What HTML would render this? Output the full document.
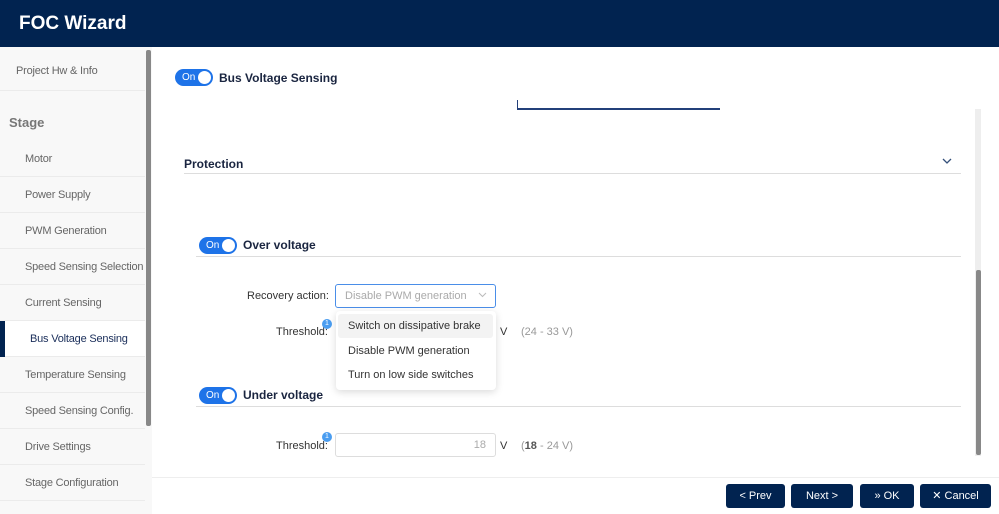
<!DOCTYPE html>
<html><head><style>
*{box-sizing:border-box;margin:0;padding:0}
body{width:999px;height:514px;overflow:hidden;font-family:"Liberation Sans",sans-serif;background:#fff;position:relative}
.hdr{position:absolute;left:0;top:0;width:999px;height:47px;background:#012350;color:#fff;font-size:19px;font-weight:bold;padding:13px 0 0 19px}
.side{position:absolute;left:0;top:47px;width:152px;height:467px;background:#f8f8f8}
.si{position:absolute;left:0;width:145px;height:36px;font-size:11px;color:#666;padding-left:25px;line-height:36px;border-bottom:1px solid #ebebeb;white-space:nowrap;letter-spacing:-0.2px}
.sb{position:absolute;left:146px;top:50px;width:5px;height:376px;background:#888;border-radius:2px}
.sel{background:#fff;color:#1a2e5a}
.sel:before{content:"";position:absolute;left:0;top:0;width:5px;height:36px;background:#012350}
.tog{position:absolute;width:38px;height:17px;border-radius:9px;background:#1e73e8;color:#fff;font-size:10px;line-height:17px;padding-left:7px}
.tog:after{content:"";position:absolute;right:2px;top:2px;width:13px;height:13px;border-radius:50%;background:#fff}
.t{position:absolute;font-weight:bold;color:#1a2540;font-size:12px}
.hr{position:absolute;height:1px;background:#ddd}
.lbl{position:absolute;font-size:11px;color:#333;white-space:nowrap}
.badge{position:absolute;width:10px;height:10px;border-radius:50%;background:#4a9df0;color:#fff;font-size:7px;text-align:center;line-height:10px}
.btn{position:absolute;top:484px;height:24px;background:#012350;color:#fff;font-size:11px;border-radius:3px;text-align:center;line-height:24px}
</style></head><body>
<div class="hdr">FOC Wizard</div>
<div class="side">
<div class="si" style="top:6px;height:38px;padding-left:16px">Project Hw &amp; Info</div>
<div style="position:absolute;left:9px;top:68px;font-size:13px;font-weight:bold;color:#777">Stage</div>
<div class="si" style="top:94px">Motor</div>
<div class="si" style="top:130px">Power Supply</div>
<div class="si" style="top:166px">PWM Generation</div>
<div class="si" style="top:202px">Speed Sensing Selection</div>
<div class="si" style="top:238px">Current Sensing</div>
<div class="si sel" style="top:274px;padding-left:30px">Bus Voltage Sensing</div>
<div class="si" style="top:310px">Temperature Sensing</div>
<div class="si" style="top:346px">Speed Sensing Config.</div>
<div class="si" style="top:382px">Drive Settings</div>
<div class="si" style="top:418px">Stage Configuration</div>
</div>
<div class="sb"></div>
<div class="tog" style="left:175px;top:69px">On</div>
<div class="t" style="left:219px;top:71px">Bus Voltage Sensing</div>
<div style="position:absolute;left:517px;top:100px;width:203px;height:10px;border-left:1px solid #23407a;border-bottom:2px solid #23407a"></div>
<div class="t" style="left:184px;top:157px">Protection</div>
<svg style="position:absolute;left:942px;top:157px" width="10" height="8"><path d="M1 2l4 4 4-4" stroke="#34507a" stroke-width="1.3" fill="none"/></svg>
<div class="hr" style="left:184px;top:173px;width:777px"></div>
<div style="position:absolute;left:975px;top:109px;width:6px;height:347px;background:#eee"></div>
<div style="position:absolute;left:976px;top:270px;width:5px;height:185px;background:#888;border-radius:2px"></div>
<div class="tog" style="left:199px;top:237px">On</div>
<div class="t" style="left:243px;top:238px">Over voltage</div>
<div class="hr" style="left:196px;top:256px;width:765px"></div>
<div class="lbl" style="left:247px;top:290px">Recovery action:</div>
<div style="position:absolute;left:335px;top:284px;width:161px;height:24px;border:1px solid #4a8ee8;border-radius:3px;font-size:11px;color:#aaa;padding:5px 0 0 9px">Disable PWM generation</div>
<svg style="position:absolute;left:478px;top:292px" width="9" height="6"><path d="M1 1l3.5 3.5L8 1" stroke="#bbb" fill="none"/></svg>
<div class="lbl" style="left:276px;top:326px">Threshold:</div>
<div class="badge" style="left:322px;top:319px">1</div>
<div class="lbl" style="left:500px;top:326px">V</div>
<div class="lbl" style="left:521px;top:326px;color:#999">(24 - 33 V)</div>
<div style="position:absolute;left:336px;top:311px;width:160px;height:79px;background:#fff;border-radius:4px;box-shadow:0 2px 8px rgba(0,0,0,.15)"></div>
<div style="position:absolute;left:338px;top:314px;width:155px;height:24px;background:#f3f3f3;border-radius:3px"></div>
<div class="lbl" style="left:348px;top:320px">Switch on dissipative brake</div>
<div class="lbl" style="left:348px;top:345px">Disable PWM generation</div>
<div class="lbl" style="left:348px;top:369px">Turn on low side switches</div>
<div class="tog" style="left:199px;top:387px">On</div>
<div class="t" style="left:243px;top:388px">Under voltage</div>
<div class="hr" style="left:196px;top:406px;width:765px"></div>
<div class="lbl" style="left:276px;top:440px">Threshold:</div>
<div class="badge" style="left:322px;top:432px">1</div>
<div style="position:absolute;left:335px;top:433px;width:161px;height:24px;border:1px solid #ddd;border-radius:3px;font-size:11px;color:#aaa;text-align:right;padding:5px 9px 0 0">18</div>
<div class="lbl" style="left:500px;top:440px">V</div>
<div class="lbl" style="left:521px;top:440px;color:#999">(<b style="color:#555">18</b> - 24 V)</div>
<div class="hr" style="left:152px;top:477px;width:847px;background:#eee"></div>
<div class="btn" style="left:726px;width:59px">&lt; Prev</div>
<div class="btn" style="left:791px;width:62px">Next &gt;</div>
<div class="btn" style="left:860px;width:54px">» OK</div>
<div class="btn" style="left:920px;width:71px">✕ Cancel</div>
</body></html>
